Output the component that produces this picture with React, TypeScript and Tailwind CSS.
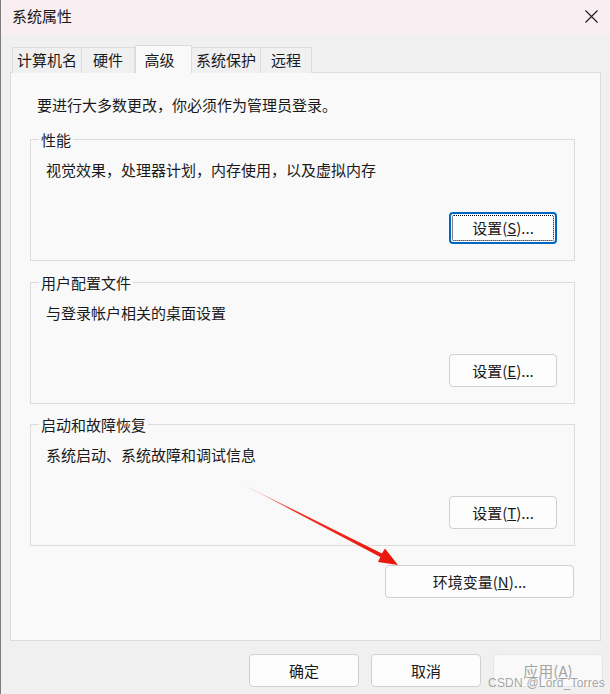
import React from "react";

const font = { fontFamily: '"Noto Sans CJK SC", "Noto Sans", sans-serif' };

function WinButton({
  children,
  className = "",
  focused = false,
  disabled = false,
}: {
  children: React.ReactNode;
  className?: string;
  focused?: boolean;
  disabled?: boolean;
}) {
  return (
    <div
      className={`relative flex items-center justify-center rounded-[4px] text-[15px] leading-none ${
        focused
          ? "border-2 border-[#0067c0] bg-[#fdfdfd] text-[#1a1a1a]"
          : disabled
          ? "border border-[#e6e6e6] bg-[#f9f9f9] text-[#a3a3a3]"
          : "border border-[#d0d0d0] bg-[#fdfdfd] text-[#1a1a1a]"
      } ${className}`}
    >
      {focused && <span className="absolute inset-[1px] rounded-[2px] border border-dotted border-black" />}
      <span className="pb-[1px]">{children}</span>
    </div>
  );
}

function Group({ title, text, button }: { title: string; text: string; button: React.ReactNode }) {
  return (
    <div className="relative ml-[19px] flex h-[122px] w-[545px] flex-col border border-[#dcdcdc] pt-[20px] pr-[17px] pb-[16px] pl-[15px]">
      <span className="absolute -top-[10px] left-[8px] bg-[#f9f9f9] px-[2px] text-[15px] leading-[20px] text-[#1a1a1a]">
        {title}
      </span>
      <p className="text-[15px] leading-[20px] text-[#1a1a1a]">{text}</p>
      <div className="mt-auto flex justify-end">{button}</div>
    </div>
  );
}

const tabs = [
  { label: "计算机名", w: "w-[70px]", active: false },
  { label: "硬件", w: "w-[54px]", active: false },
  { label: "高级", w: "w-[57px]", active: true },
  { label: "系统保护", w: "w-[70px]", active: false },
  { label: "远程", w: "w-[52px]", active: false },
];

export default function App() {
  return (
    <div
      className="relative flex h-[694px] w-[610px] flex-col overflow-hidden border-l border-[#7c7c7c] bg-[#f0f0f0]"
      style={font}
    >
      {/* title bar */}
      <div className="flex h-[35px] items-center justify-between bg-[#f9eef2] pl-[11px] pr-[12px]">
        <span className="-mt-[3px] text-[15px] text-[#1a1a1a]">系统属性</span>
        <svg width="13" height="13" viewBox="0 0 13 13" className="mt-[-3px]">
          <path d="M0.5 0.5L12.5 12.5M12.5 0.5L0.5 12.5" stroke="#1a1a1a" strokeWidth="1.1" />
        </svg>
      </div>

      <div className="flex flex-col px-[9px] pt-[10px]">
        {/* tabs */}
        <div className="relative z-10 -mb-px flex h-[28px] items-end pl-[2px]">
          {tabs.map((t) =>
            t.active ? (
              <div
                key={t.label}
                className={`${t.w} flex h-[28px] items-start justify-center border border-b-0 border-[#dcdcdc] bg-[#f9f9f9] pt-[3px] pr-[8px] text-[15px] text-[#1a1a1a]`}
              >
                {t.label}
              </div>
            ) : (
              <div
                key={t.label}
                className={`${t.w} -ml-px flex h-[26px] items-center justify-center border border-b-0 border-[#dcdcdc] bg-[#f0f0f0] pb-[1px] text-[15px] text-[#1a1a1a] first:ml-0`}
              >
                {t.label}
              </div>
            )
          )}
        </div>

        {/* tab panel */}
        <div className="flex h-[569px] w-[591px] flex-col border border-[#dcdcdc] bg-[#f9f9f9] pt-[22px]">
          <p className="pl-[26px] text-[15px] leading-[20px] text-[#1a1a1a]">要进行大多数更改，你必须作为管理员登录。</p>

          <div className="mt-[24px]">
            <Group
              title="性能"
              text="视觉效果，处理器计划，内存使用，以及虚拟内存"
              button={
                <WinButton focused className="h-[32px] w-[108px]">
                  设置(<u>S</u>)...
                </WinButton>
              }
            />
          </div>
          <div className="mt-[21px]">
            <Group
              title="用户配置文件"
              text="与登录帐户相关的桌面设置"
              button={
                <WinButton className="h-[33px] w-[108px]">
                  设置(<u>E</u>)...
                </WinButton>
              }
            />
          </div>
          <div className="mt-[20px]">
            <Group
              title="启动和故障恢复"
              text="系统启动、系统故障和调试信息"
              button={
                <WinButton className="h-[33px] w-[108px]">
                  设置(<u>T</u>)...
                </WinButton>
              }
            />
          </div>

          <div className="mt-[19px] flex justify-end pr-[26px]">
            <WinButton className="h-[33px] w-[189px]">
              环境变量(<u>N</u>)...
            </WinButton>
          </div>
        </div>

        {/* dialog buttons */}
        <div className="-mr-[2px] mt-[13px] flex justify-end gap-[12px]">
          <WinButton className="h-[33px] w-[110px]">确定</WinButton>
          <WinButton className="h-[33px] w-[110px]">取消</WinButton>
          <WinButton disabled className="h-[33px] w-[110px]">
            应用(<u>A</u>)
          </WinButton>
        </div>
      </div>

      {/* red annotation arrow */}
      <svg className="pointer-events-none absolute left-0 top-0" width="610" height="694">
        <defs>
          <linearGradient id="arrowFade" x1="240" y1="484" x2="397" y2="565" gradientUnits="userSpaceOnUse">
            <stop offset="0" stopColor="#ff6b6b" stopOpacity="0.3" />
            <stop offset="0.35" stopColor="#f03020" />
            <stop offset="1" stopColor="#e8160c" />
          </linearGradient>
        </defs>
        <polygon
          points="240,483.5 380.9,553.4 384,548.5 397,565 377,562 379.3,557 "
          fill="url(#arrowFade)"
        />
      </svg>

      {/* watermark */}
      <span
        className="pointer-events-none absolute bottom-[5px] right-[5px] text-[12px] leading-none tracking-[0.2px] text-[#8e8e8e]/80"
        style={{ fontFamily: '"Liberation Sans", Arial, sans-serif' }}
      >
        CSDN @Lord_Torres
      </span>
    </div>
  );
}
